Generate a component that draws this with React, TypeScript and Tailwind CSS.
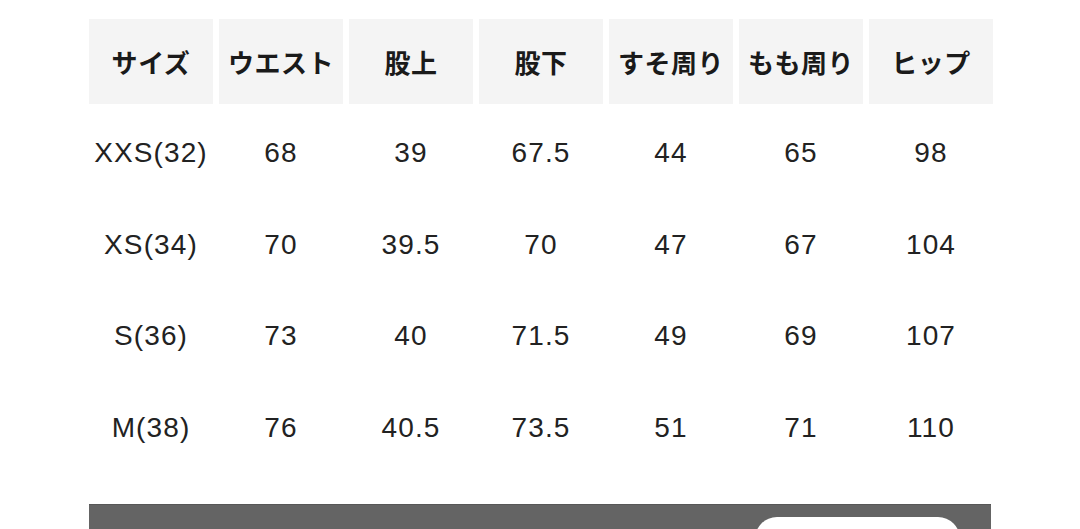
const HEADERS = ['サイズ', 'ウエスト', '股上', '股下', 'すそ周り', 'もも周り', 'ヒップ']

const ROWS = [
  ['XXS(32)', '68', '39', '67.5', '44', '65', '98'],
  ['XS(34)', '70', '39.5', '70', '47', '67', '104'],
  ['S(36)', '73', '40', '71.5', '49', '69', '107'],
  ['M(38)', '76', '40.5', '73.5', '51', '71', '110'],
]

export default function App() {
  return (
    <div className="w-[1080px] h-[529px] overflow-hidden bg-white">
      <div className="pl-[89px] pt-[19px]">
        <div className="grid grid-cols-[repeat(7,124px)] gap-x-[6px] gap-y-[6.5px]">
          {HEADERS.map((h) => (
            <div
              key={h}
              className="h-[85px] bg-[#f4f4f4] flex items-center justify-center text-[26px] font-bold text-[#1a1a1a] tracking-[0.02em]"
              style={{ fontFamily: '"Noto Sans CJK JP", "Noto Sans", sans-serif' }}
            >
              {h}
            </div>
          ))}
          {ROWS.map((row) =>
            row.map((cell, i) => (
              <div
                key={row[0] + i}
                className="h-[85px] flex items-center justify-center text-[28px] tracking-[0.04em] text-[#222] font-['Liberation_Sans',Arial,sans-serif]"
              >
                {cell}
              </div>
            ))
          )}
        </div>

        {/* dark footer bar with the white pill button peeking in */}
        <div className="mt-[34px] w-[902px] h-[60px] bg-[#646464] border-t border-[#575757] flex justify-end pr-[31px] pt-[12px]">
          <div className="w-[205px] h-[44px] rounded-full bg-white" />
        </div>
      </div>
    </div>
  )
}
